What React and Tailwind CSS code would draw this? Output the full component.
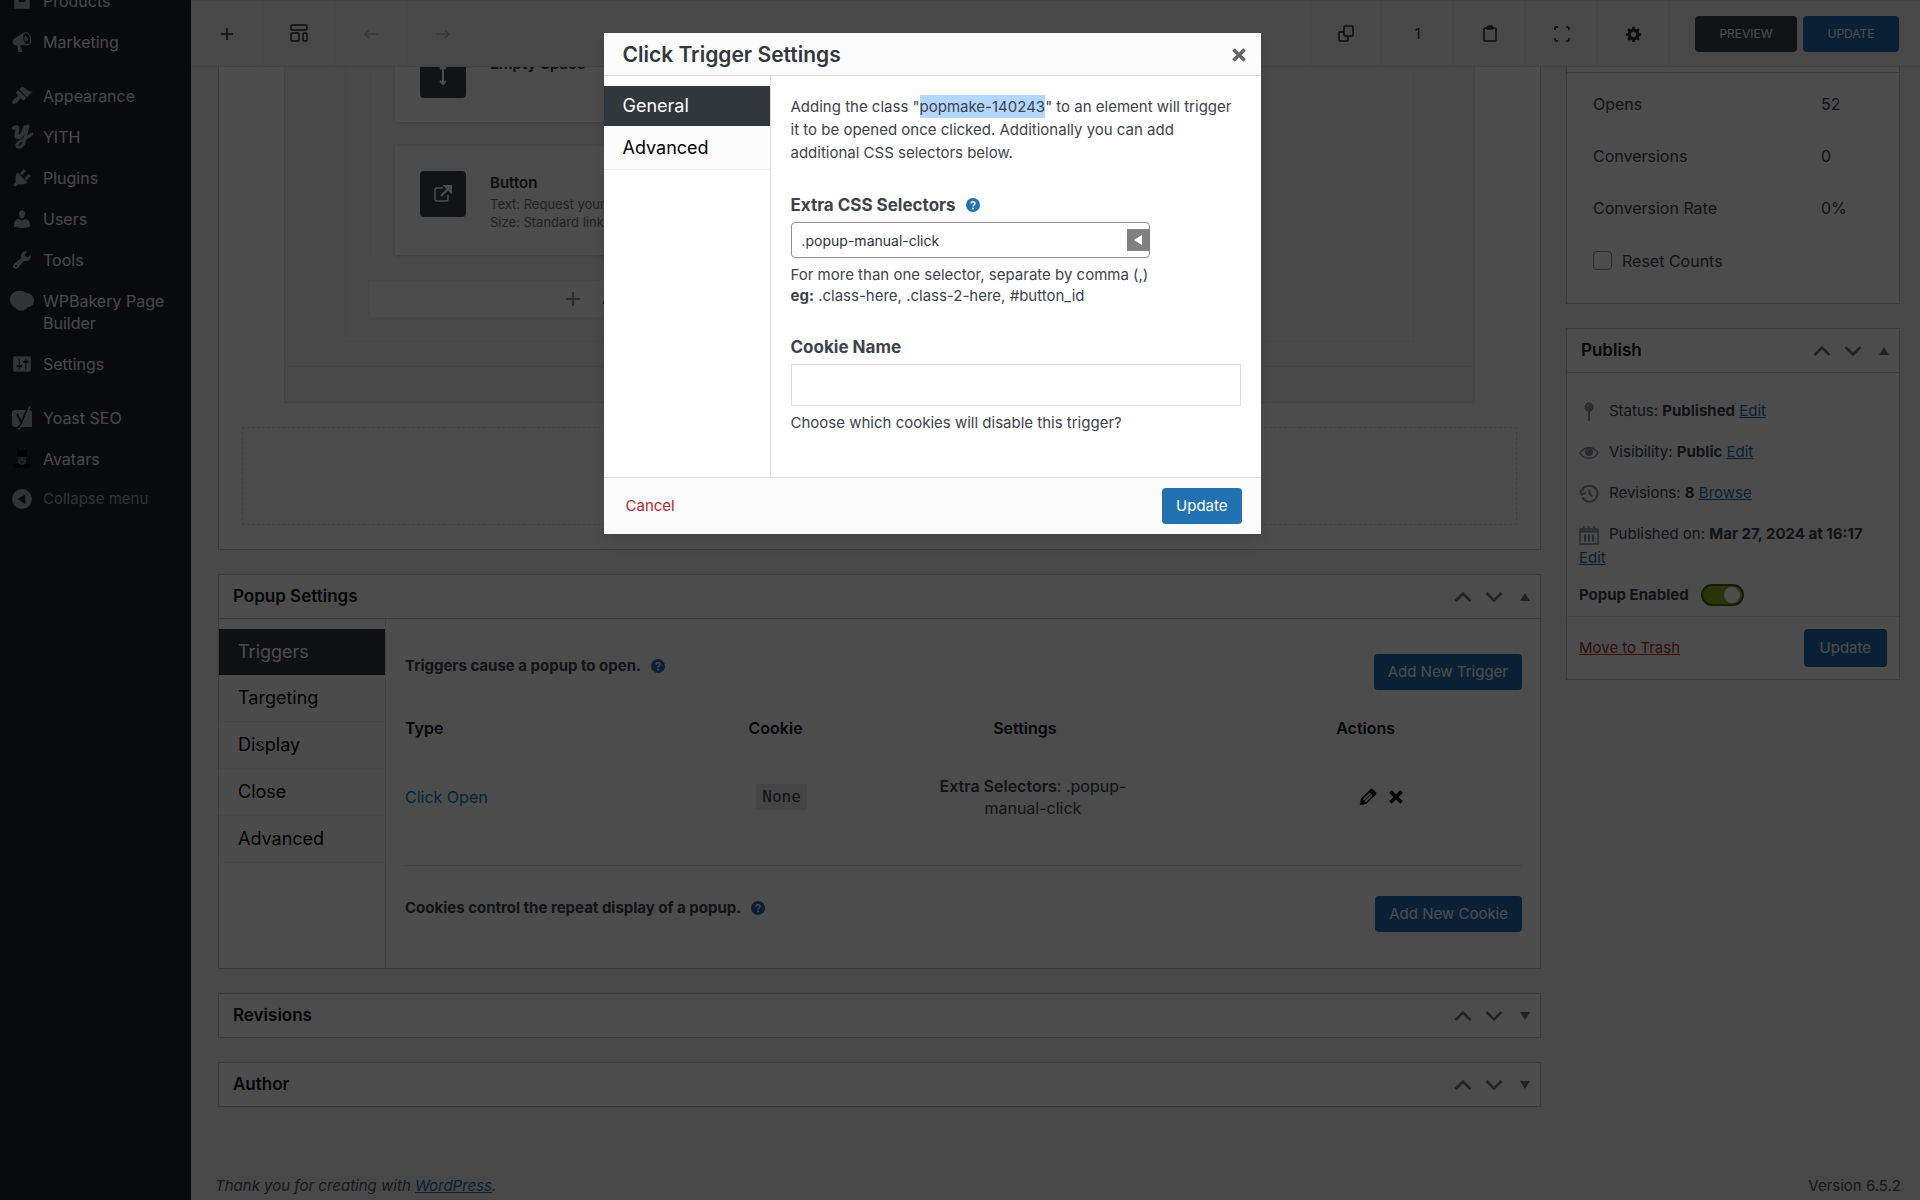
const DASHICONS = {
  products: 'M2 3h16v3H2zM3 7h14v10H3zM7 9v2h6V9z',
  marketing:
    'M18.15 5.94c.46 1.62.38 3.22-.02 4.48-.42 1.28-1.26 2.18-2.3 2.48-.16.06-.26.06-.4.06-.06.02-.12.02-.18.02-.06.02-.14.02-.22.02h-6.8l2.22 5.5c.02.14-.06.26-.14.34-.08.1-.24.16-.34.16H6.95c-.1 0-.26-.06-.34-.16-.08-.08-.16-.2-.14-.34l-1-5.5H4.25l-.02-.02c-.5.06-1.08-.18-1.54-.62s-.88-1.08-1.06-1.88c-.24-.8-.2-1.56-.02-2.2.18-.62.58-1.08 1.06-1.3l.02-.02 9-5.4c.1-.06.18-.1.24-.16.06-.04.14-.08.24-.12.16-.08.28-.12.5-.18 1.04-.3 2.24.1 3.22.98s1.84 2.24 2.26 3.86zm-2.58 5.98h-.02c.4-.1.74-.34 1.04-.7.58-.7.86-1.76.86-3.04 0-.64-.1-1.3-.28-1.98-.34-1.36-1.02-2.5-1.78-3.24s-1.68-1.1-2.46-.88c-.82.22-1.4.96-1.7 2-.32 1.04-.28 2.36.06 3.72.38 1.36 1 2.5 1.8 3.24.78.74 1.62 1.1 2.48.88zm-2.54-7.08c.22-.04.42-.02.62.04.38.16.76.48 1.02 1s.42 1.2.42 1.78c0 .3-.04.56-.12.8-.18.48-.44.84-.86.94-.34.1-.8-.06-1.14-.4s-.64-.86-.78-1.5c-.18-.62-.12-1.24.02-1.72s.48-.84.82-.94z',
  appearance:
    'M14.48 11.06L7.41 3.99l1.5-1.5c.5-.56 2.3-.47 3.51.32 1.21.8 1.43 1.28 2.91 2.1 1.18.64 2.45 1.26 4.45.85zm-.71.71L6.7 4.7 4.93 6.47c-.39.39-.39 1.02 0 1.41l1.06 1.06c.39.39.39 1.03 0 1.42-.6.6-1.43 1.11-2.21 1.69-.35.26-.7.53-1.01.84C1.43 14.23.4 16.08 1.4 17.07c.99 1 2.84-.03 4.18-1.36.31-.31.58-.66.85-1.02.57-.78 1.08-1.61 1.69-2.21.39-.39 1.02-.39 1.41 0l1.06 1.06c.39.39 1.02.39 1.41 0z',
  plugins:
    'M13.11 4.36L9.87 7.6 8 5.73l3.24-3.24c.35-.34 1.05-.2 1.56.32.52.51.66 1.21.31 1.55zm-8 1.77l.91-1.12 9.01 9.01-1.19.84c-.71.71-2.63 1.16-3.82 1.16H6.14L4.9 17.26c-.59.59-1.54.59-2.12 0-.59-.58-.59-1.53 0-2.12l1.24-1.24v-3.88c0-1.13.4-3.19 1.09-3.89zm7.26 3.97l3.24-3.24c.34-.35 1.04-.21 1.55.31.52.51.66 1.21.31 1.55l-3.24 3.25z',
  users:
    'M10 9.25c-2.27 0-2.73-3.44-2.73-3.44C7 4.02 7.82 2 9.97 2c2.16 0 2.98 2.02 2.71 3.81 0 0-.41 3.44-2.68 3.44zm0 2.57L12.72 10c2.39 0 4.52 2.33 4.52 4.53v2.49s-3.65 1.13-7.24 1.13c-3.65 0-7.24-1.13-7.24-1.13v-2.49c0-2.25 1.94-4.48 4.47-4.48z',
  tools:
    'M16.68 9.77c-1.34 1.34-3.3 1.67-4.95.99l-5.41 6.52c-.99.99-2.59.99-3.58 0s-.99-2.59 0-3.57l6.52-5.42c-.68-1.65-.35-3.61.99-4.95 1.28-1.28 3.12-1.62 4.72-1.06l-2.89 2.89 2.82 2.82 2.86-2.87c.53 1.58.18 3.39-1.08 4.65zM3.81 16.21c.4.39 1.04.39 1.43 0 .4-.4.4-1.04 0-1.43-.39-.4-1.03-.4-1.43 0-.39.39-.39 1.03 0 1.43z',
  bakery: 'M8 1.5c2 0 3.6.5 4.8 1.7C16.5 3.2 20 5.5 20 9.5c0 4-3 5.5-5.2 5.5C13.5 17.5 11 18 9 18c-2.2 0-3.6-1-4.4-2.2C1.5 14.5 0 12 0 8.8 0 4.5 3.5 1.5 8 1.5z',
  settings:
    'M18 16V4c0-.55-.45-1-1-1H3c-.55 0-1 .45-1 1v12c0 .55.45 1 1 1h14c.55 0 1-.45 1-1zM8 11h1c.55 0 1 .45 1 1s-.45 1-1 1H8v1.5c0 .28-.22.5-.5.5s-.5-.22-.5-.5V13H6c-.55 0-1-.45-1-1s.45-1 1-1h1V5.5c0-.28.22-.5.5-.5s.5.22.5.5V11zm5-2h-1c-.55 0-1-.45-1-1s.45-1 1-1h1V5.5c0-.28.22-.5.5-.5s.5.22.5.5V7h1c.55 0 1 .45 1 1s-.45 1-1 1h-1v5.5c0 .28-.22.5-.5.5s-.5-.22-.5-.5V9z',
  collapse: 'M10 1a9 9 0 1 1 0 18 9 9 0 0 1 0-18zM13 5.5L6 10l7 4.5z',
  gear:
    'M18 12h-2.18c-.17.7-.44 1.35-.81 1.93l1.54 1.54-2.1 2.1-1.54-1.54c-.58.36-1.23.63-1.91.79V19H8v-2.18c-.68-.16-1.33-.43-1.91-.79l-1.54 1.54-2.12-2.12 1.54-1.54c-.36-.58-.63-1.23-.79-1.91H1V9.03h2.17c.16-.7.44-1.35.8-1.94L2.43 5.55l2.1-2.1 1.54 1.54c.58-.37 1.24-.64 1.93-.81V2h3v2.18c.68.16 1.33.43 1.91.79l1.54-1.54 2.12 2.12-1.54 1.54c.36.59.64 1.24.8 1.94H18V12zm-8.5 1.5c1.66 0 3-1.34 3-3s-1.34-3-3-3-3 1.34-3 3 1.34 3 3 3z',
  edit:
    'M13.89 3.39l2.71 2.72c.46.46.42 1.24.03 1.64l-8.01 8.02-5.56 1.16 1.16-5.58s7.6-7.63 7.99-8.03c.39-.39 1.22-.39 1.68.07zm-2.73 2.79l-5.59 5.61 1.11 1.11 5.54-5.65zm-2.97 8.23l5.58-5.6-1.07-1.08-5.59 5.6z',
  close:
    'M12.12 10l3.53 3.53-2.12 2.12L10 12.12l-3.54 3.54-2.12-2.12L7.88 10 4.34 6.46l2.12-2.12L10 7.88l3.54-3.53 2.12 2.12z',
};

function Dashicon({ name, size = 22, className = '' }) {
  return (
    <svg width={size} height={size} viewBox="0 0 20 20" fill="currentColor" fillRule="evenodd" className={className} aria-hidden="true">
      <path d={DASHICONS[name]} />
    </svg>
  );
}

function YithIcon() {
  return (
    <svg width="22" height="26" viewBox="0 0 22 26" fill="none" stroke="currentColor" strokeLinecap="round" aria-hidden="true">
      <path d="M3 4c4-2 4 0 3 4s-1 6 2 5 5-5 6-10" strokeWidth="4" />
      <path d="M17 2l-3 13c-1 6-4 9-7 8s0-5 4-7 7-3 10-6" strokeWidth="3" />
    </svg>
  );
}

function YoastIcon() {
  return (
    <svg width="22" height="24" viewBox="0 0 22 24" aria-hidden="true">
      <path d="M4 4h14a3 3 0 0 1 3 3v13a1 1 0 0 1-1 1H4a3 3 0 0 1-3-3V7a3 3 0 0 1 3-3z" fill="currentColor" />
      <path d="M6 8l4 8M17 1l-6.500 16c-1 3-2 4-4 4.500" fill="none" stroke="#1d2327" strokeWidth="2" />
      <path d="M19 0l-7.500 18c-1 3-2 4.500-4.500 5" fill="none" stroke="currentColor" strokeWidth="1.500" />
    </svg>
  );
}

function AvatarIcon() {
  return (
    <svg width="22" height="22" viewBox="0 0 22 22" aria-hidden="true">
      <path d="M6 2h10v6H6zM1 16h20l-3 4H4z" fill="#000" />
      <path d="M7 9h8v4c0 3-2 4-4 4s-4-1-4-4z" fill="#777" />
      <path d="M7 11h3M12 11h3M9 14h4" stroke="#1d2327" strokeWidth="1" />
    </svg>
  );
}

const MENU = [
  [
    { label: 'Products', icon: <Dashicon name="products" /> },
    { label: 'Marketing', icon: <Dashicon name="marketing" /> },
  ],
  [
    { label: 'Appearance', icon: <Dashicon name="appearance" /> },
    { label: 'YITH', icon: <YithIcon /> },
    { label: 'Plugins', icon: <Dashicon name="plugins" /> },
    { label: 'Users', icon: <Dashicon name="users" /> },
    { label: 'Tools', icon: <Dashicon name="tools" /> },
    { label: 'WPBakery Page Builder', icon: <Dashicon name="bakery" size={24} /> },
    { label: 'Settings', icon: <Dashicon name="settings" /> },
  ],
  [
    { label: 'Yoast SEO', icon: <YoastIcon /> },
    { label: 'Avatars', icon: <AvatarIcon /> },
  ],
];

function Sidebar() {
  return (
    <nav className="w-[191px] shrink-0 bg-[#1d2327] text-base leading-[22px] text-[#f0f0f1] overflow-hidden">
      <div className="-mt-[19px]">
        {MENU.map((group, i) => (
          <ul key={i} className="mb-[13px]">
            {group.map(item => (
              <li key={item.label}>
                <a href="#" className="flex items-start pt-[9px] pb-[10px] pr-4">
                  <span className="w-[43px] h-[22px] shrink-0 flex items-center justify-center text-[#a7aaad]">{item.icon}</span>
                  {item.label}
                </a>
              </li>
            ))}
          </ul>
        ))}
        <button type="button" className="-mt-[13px] flex items-center py-2 text-[15px] text-[#a7aaad]">
          <span className="w-[43px] flex justify-center">
            <Dashicon name="collapse" />
          </span>
          Collapse menu
        </button>
      </div>
    </nav>
  );
}

function ToolIcon({ children, muted }) {
  return (
    <svg
      width="20"
      height="20"
      viewBox="0 0 20 20"
      fill="none"
      stroke="currentColor"
      strokeWidth="1.5"
      className={muted ? 'text-[#bbb]' : 'text-[#2b2b2b]'}
      aria-hidden="true"
    >
      {children}
    </svg>
  );
}

function ToolButton({ label, side = 'border-r', children }) {
  return (
    <button type="button" aria-label={label} className={`w-[72px] h-full flex items-center justify-center border-[#e3e3e4] ${side}`}>
      {children}
    </button>
  );
}

function Toolbar() {
  return (
    <header className="relative z-10 h-[67px] flex items-stretch bg-[#f0f0f1] border-y border-[#dcdcde]">
      <ToolButton label="Add element">
        <ToolIcon><path d="M10 4v12M4 10h12" /></ToolIcon>
      </ToolButton>
      <ToolButton label="Templates">
        <ToolIcon>
          <rect x="2" y="1" width="16" height="5" rx="1.500" />
          <rect x="2" y="9" width="8" height="8" rx="1" />
          <rect x="14" y="9" width="4" height="8" rx="1" />
        </ToolIcon>
      </ToolButton>
      <ToolButton label="Undo">
        <ToolIcon muted><path d="M17 10H4M8 6l-4 4 4 4" /></ToolIcon>
      </ToolButton>
      <ToolButton label="Redo" side="">
        <ToolIcon muted><path d="M3 10h13M12 6l4 4-4 4" /></ToolIcon>
      </ToolButton>
      <div className="ml-auto flex">
        <ToolButton label="Copy" side="border-x">
          <ToolIcon>
            <rect x="8" y="2" width="9" height="10" rx="1" />
            <path d="M8 8H4a1 1 0 0 0-1 1v7a1 1 0 0 0 1 1h7a1 1 0 0 0 1-1v-4" />
          </ToolIcon>
        </ToolButton>
        <ToolButton label="Copied elements">
          <span className="text-sm text-[#2b2b2b]">1</span>
        </ToolButton>
        <ToolButton label="Paste">
          <ToolIcon>
            <rect x="4" y="4" width="12" height="13" rx="1" />
            <path d="M7.500 3.500c0-2 5-2 5 0V5h-5z" />
          </ToolIcon>
        </ToolButton>
        <ToolButton label="Full screen">
          <ToolIcon>
            <path d="M6 3H4a1 1 0 0 0-1 1v2M14 3h2a1 1 0 0 1 1 1v2M6 17H4a1 1 0 0 1-1-1v-2M14 17h2a1 1 0 0 0 1-1v-2" />
          </ToolIcon>
        </ToolButton>
        <ToolButton label="Page settings">
          <Dashicon name="gear" size={18} className="text-[#2b2b2b]" />
        </ToolButton>
        <div className="flex items-center gap-[6px] pl-[25px] pr-[21px] text-[12px]">
          <button type="button" className="w-[102px] h-9 rounded-sm bg-[#3d4148] text-white uppercase">Preview</button>
          <button type="button" className="w-24 h-9 rounded-sm bg-[#2271b1] text-white uppercase">Update</button>
        </div>
      </div>
    </header>
  );
}

function Chevron({ up }) {
  return (
    <svg width="18" height="12" viewBox="0 0 18 12" fill="none" stroke="currentColor" strokeWidth="2.500" aria-hidden="true">
      <path d={up ? 'M1.500 10L9 2.500l7.500 7.500' : 'M1.500 2L9 9.500 16.500 2'} />
    </svg>
  );
}

function Postbox({ title, open = true, children }) {
  return (
    <section className="bg-white border border-[#c3c4c7]">
      <div className={`flex items-center pl-[14px] ${open ? 'h-[44px] border-b border-[#c3c4c7]' : 'h-[43px]'}`}>
        <h2 className="flex-1 text-[17px] font-semibold text-[#101418]">{title}</h2>
        <div className="flex text-[#70747a]">
          <button type="button" aria-label={`Move ${title} up`} className="w-[31px] h-8 flex items-center justify-center">
            <Chevron up />
          </button>
          <button type="button" aria-label={`Move ${title} down`} className="w-[31px] h-8 flex items-center justify-center">
            <Chevron />
          </button>
          <button type="button" aria-label={`Toggle ${title}`} className="w-[31px] h-8 flex items-center justify-center">
            <svg width="10" height="8" viewBox="0 0 10 8" fill="currentColor" aria-hidden="true">
              <path d={open ? 'M5 0l5 8H0z' : 'M0 0h10L5 8z'} />
            </svg>
          </button>
        </div>
      </div>
      {children}
    </section>
  );
}

function ElementCard({ icon, title, children }) {
  return (
    <div className="flex bg-white px-[25px] pt-[25px] pb-6 shadow-sm">
      <span className="size-[46px] shrink-0 mr-6 rounded-sm bg-[#3d4148] text-white flex items-center justify-center">
        <svg width="22" height="22" viewBox="0 0 22 22" fill="none" stroke="currentColor" strokeWidth="2" aria-hidden="true">
          {icon}
        </svg>
      </span>
      <div className="text-[13px] leading-[18px] text-[#777]">
        <h3 className="mb-[3px] pt-[2px] text-[15px] leading-[19px] font-semibold text-[#333]">{title}</h3>
        {children}
      </div>
    </div>
  );
}

function Builder() {
  return (
    <section className="bg-white border border-[#c3c4c7] px-[23px] pb-6">
      <div className="mx-[42px] bg-[#f0f0f1] border border-[#e0e0e0]">
        <div className="px-[60px] pb-6 border-b border-[#e2e2e2]">
          <div className="border border-[#e6e6e6] px-6 pb-6">
            <div className="w-1/2">
              <div className="border-x border-[#e6e6e6] px-6">
                <ElementCard title="Empty Space" icon={<path d="M11 2v18M8 5l3-3 3 3M8 17l3 3 3-3" />} />
                <div className="h-6" />
                <ElementCard
                  title="Button"
                  icon={
                    <>
                      <path d="M11 5H5a2 2 0 0 0-2 2v9a2 2 0 0 0 2 2h9a2 2 0 0 0 2-2v-4" strokeWidth="1.500" />
                      <path d="M9 13l9-9M13 3h6v6z" />
                    </>
                  }
                >
                  <p>Text: Request your</p>
                  <p>Size: Standard link</p>
                </ElementCard>
              </div>
              <button type="button" className="mt-[26px] w-full h-9 bg-white flex items-center justify-center gap-5 text-sm text-[#777]">
                <svg width="18" height="18" viewBox="0 0 18 18" stroke="currentColor" strokeWidth="1.500" aria-hidden="true">
                  <path d="M9 2v14M2 9h14" />
                </svg>
                Add element
              </button>
            </div>
          </div>
        </div>
        <div className="h-[35px]" />
      </div>
      <div className="mt-6 h-[98px] border border-dashed border-[#ddd]" />
    </section>
  );
}

function Help() {
  return (
    <svg width="14" height="14" viewBox="0 0 14 14" className="shrink-0" aria-hidden="true">
      <circle cx="7" cy="7" r="7" fill="#2271b1" />
      <path d="M5 5.500c0-2.500 4-2.500 4 0 0 1.500-2 1.500-2 3" fill="none" stroke="#fff" strokeWidth="1.500" />
      <circle cx="7" cy="10.500" r="1" fill="#fff" />
    </svg>
  );
}

function PrimaryButton({ children, size = 'h-9 px-[14px]' }) {
  return (
    <button type="button" className={`rounded-sm bg-[#2271b1] text-[15px] text-white ${size}`}>
      {children}
    </button>
  );
}

const TABS = ['Triggers', 'Targeting', 'Display', 'Close', 'Advanced'];

function PopupSettings() {
  return (
    <Postbox title="Popup Settings">
      <div className="flex">
        <ul className="w-[167px] shrink-0 border-r border-[#ddd] pt-[10px]">
          {TABS.map((tab, i) => (
            <li key={tab} className={i === 0 ? 'bg-[#32373c] text-white' : 'bg-[#fcfcfc] text-black border-b border-[#eee]'}>
              <button type="button" className="w-full h-[46px] pl-[19px] text-left text-lg">{tab}</button>
            </li>
          ))}
        </ul>
        <div className="flex-1 pl-[19px] pr-[18px] pt-[35px] pb-9">
          <div className="flex items-start justify-between">
            <p className="flex items-center gap-[10px] leading-6 text-[15px] font-bold text-[#3c434a]">
              Triggers cause a popup to open. <Help />
            </p>
            <PrimaryButton>Add New Trigger</PrimaryButton>
          </div>
          <table className="w-full table-fixed mt-[23px] text-base leading-[22px] text-[#3c434a]">
            <thead className="text-[#101418]">
              <tr>
                <th className="w-[27%] py-1 text-left font-semibold">Type</th>
                <th className="w-[12%] py-1 pl-1 font-semibold">Cookie</th>
                <th className="w-[33%] py-1 font-semibold">Settings</th>
                <th className="w-[28%] py-1 font-semibold">Actions</th>
              </tr>
            </thead>
            <tbody>
              <tr className="text-center">
                <td className="py-[43px] text-left">
                  <a href="#" className="text-[#0085ba]">Click Open</a>
                </td>
                <td className="pl-4">
                  <code className="inline-block px-[6px] py-[2px] bg-[#e8e8e9] font-['DejaVu_Sans_Mono',monospace] text-base leading-[22px]">None</code>
                </td>
                <td className="pl-20 pr-16">
                  <strong className="font-semibold">Extra Selectors</strong>: .popup-manual-click
                </td>
                <td className="pl-8">
                  <div className="flex items-center justify-center gap-1 text-black">
                    <button type="button" aria-label="Edit trigger"><Dashicon name="edit" size={24} /></button>
                    <button type="button" aria-label="Delete trigger"><Dashicon name="close" size={24} /></button>
                  </div>
                </td>
              </tr>
            </tbody>
          </table>
          <hr className="mt-[14px] mb-[30px] border-[#ddd]" />
          <div className="flex items-start justify-between">
            <p className="flex items-center gap-[10px] leading-6 text-[15px] font-bold text-[#3c434a]">
              Cookies control the repeat display of a popup. <Help />
            </p>
            <PrimaryButton>Add New Cookie</PrimaryButton>
          </div>
        </div>
      </div>
    </Postbox>
  );
}

const STATS = [
  ['Opens', '52'],
  ['Conversions', '0'],
  ['Conversion Rate', '0%'],
];

function Analytics() {
  return (
    <Postbox title="Analytics">
      <div className="px-[26px] pt-[5px] pb-4 text-base text-[#3c434a]">
        <table className="w-full">
          <tbody>
            {STATS.map(([name, value]) => (
              <tr key={name} className="h-[52px]">
                <td>{name}</td>
                <td className="w-[52px]">{value}</td>
              </tr>
            ))}
          </tbody>
        </table>
        <label className="flex items-center gap-[10px] h-[53px]">
          <input type="checkbox" className="appearance-none size-[19px] rounded border border-[#8c8f94] bg-white" />
          Reset Counts
        </label>
      </div>
    </Postbox>
  );
}

const STATUS_ROWS = [
  {
    label: 'Status:',
    value: 'Published',
    action: 'Edit',
    icon: (
      <>
        <circle cx="10" cy="5" r="4.500" fill="currentColor" stroke="none" />
        <path d="M10 8v11" />
        <path d="M8 4.500c0-1 1-2 2-2" stroke="#fff" strokeWidth="1" />
      </>
    ),
  },
  {
    label: 'Visibility:',
    value: 'Public',
    action: 'Edit',
    icon: (
      <>
        <path d="M1 10c4-7 14-7 18 0-4 7-14 7-18 0z" strokeWidth="1.500" />
        <circle cx="10" cy="9" r="4" fill="currentColor" stroke="none" />
        <path d="M8 8.500c0-1 1-2 2-2" stroke="#fff" strokeWidth="1" />
      </>
    ),
  },
  {
    label: 'Revisions:',
    value: '8',
    action: 'Browse',
    icon: <path d="M3.500 13.500A8 8 0 1 0 3 7M1 6l1.500 4.500L7 9M10.500 5.500V10l3 2.500" strokeWidth="2" />,
  },
  {
    label: 'Published on:',
    value: 'Mar 27, 2024 at 16:17',
    action: 'Edit',
    icon: (
      <>
        <path d="M1 4h18v15H1zM5 1v4M10 1v4M15 1v4" strokeWidth="1.500" />
        <path d="M1 6.500h18M6 9.500v7M10 9.500v7M14 9.500v7" strokeWidth="2" />
      </>
    ),
  },
];

function Publish() {
  return (
    <Postbox title="Publish">
      <div className="px-3 pt-[18px] pb-[9px] text-[15px] leading-6 text-[#3c434a]">
        {STATUS_ROWS.map(row => (
          <p key={row.label} className="pt-2 pb-[9px]">
            <svg
              width="20"
              height="20"
              viewBox="0 0 20 20"
              fill="none"
              stroke="currentColor"
              strokeWidth="2"
              className="inline-block mr-[10px] text-[#8c8f94]"
              aria-hidden="true"
            >
              {row.icon}
            </svg>
            {row.label} <strong className="font-bold">{row.value}</strong>{' '}
            <a href="#" className="text-[#2271b1] underline">{row.action}</a>
          </p>
        ))}
        <label className="flex items-center gap-3 mt-1 font-bold">
          Popup Enabled
          <span className="relative flex">
            <input
              type="checkbox"
              role="switch"
              defaultChecked
              className="appearance-none w-[43px] h-[22px] rounded-full border-2 border-[#4a5a10] bg-[#8fae1b]"
            />
            <span className="absolute right-1 top-[3px] size-4 rounded-full bg-white pointer-events-none" />
          </span>
        </label>
      </div>
      <div className="flex items-center justify-between border-t border-[#dcdcde] p-3 text-[15px]">
        <a href="#" className="text-[#b32d2e] underline">Move to Trash</a>
        <PrimaryButton size="h-[38px] px-4">Update</PrimaryButton>
      </div>
    </Postbox>
  );
}

function TriggerModal() {
  return (
    <div
      role="dialog"
      aria-modal="true"
      aria-labelledby="modal-title"
      className="w-[657px] mt-[33px] bg-white shadow-lg text-[#3c434a]"
    >
      <div className="h-[43px] flex items-center justify-between pl-[19px] pr-[10px] pt-[2px] bg-[#fcfcfc] border-b border-[#ddd]">
        <h1 id="modal-title" className="text-[21px] font-semibold text-[#32373c]">Click Trigger Settings</h1>
        <button type="button" aria-label="Close" className="text-[#666]">
          <Dashicon name="close" size={24} />
        </button>
      </div>
      <div className="flex">
        <ul className="w-[167px] shrink-0 border-r border-[#ddd] pt-[10px] text-lg">
          <li className="bg-[#32373c] text-white">
            <button type="button" className="w-full h-10 pl-[19px] text-left">General</button>
          </li>
          <li className="bg-[#fcfcfc] text-black border-b border-[#eee]">
            <button type="button" className="w-full h-[43px] pl-[19px] text-left">Advanced</button>
          </li>
        </ul>
        <div className="flex-1 px-5 pt-[19px] pb-[44px] text-[15px]">
          <p className="leading-[23px]">
            Adding the class "<mark className="bg-[#b3d7ff] py-[2px] text-inherit">popmake-140243</mark>" to an element will trigger it to be opened once
            clicked. Additionally you can add additional CSS selectors below.
          </p>
          <label htmlFor="selectors" className="mt-[29px] flex items-center gap-[10px] text-[17px] leading-6 font-bold">
            Extra CSS Selectors <Help />
          </label>
          <div className="relative w-[359px] mt-[5px]">
            <input
              id="selectors"
              type="text"
              defaultValue=".popup-manual-click"
              className="block w-full h-9 px-[10px] border border-[#8c8f94] rounded text-sm text-[#2c3338]"
            />
            <button type="button" aria-label="Pick selector" className="absolute right-0 top-[7px] w-[23px] h-[22px] bg-[#808080] flex items-center justify-center">
              <svg width="8" height="10" viewBox="0 0 8 10" fill="#fff" aria-hidden="true"><path d="M8 0v10L0 5z" /></svg>
            </button>
          </div>
          <p className="mt-[6px] leading-[21px]">
            For more than one selector, separate by comma (,)
            <br />
            <strong className="font-bold">eg:</strong> .class-here, .class-2-here, #button_id
          </p>
          <label htmlFor="cookie" className="mt-[29px] block text-[17px] leading-6 font-bold">Cookie Name</label>
          <input id="cookie" type="text" className="block w-full h-[42px] mt-[5px] px-2 border border-[#ddd]" />
          <p className="mt-[6px] leading-[21px]">Choose which cookies will disable this trigger?</p>
        </div>
      </div>
      <div className="flex items-center justify-between h-[57px] pl-[22px] pr-[19px] bg-[#fcfcfc] border-t border-[#ddd] text-[15px]">
        <button type="button" className="text-[#b32d2e]">Cancel</button>
        <PrimaryButton>Update</PrimaryButton>
      </div>
    </div>
  );
}

export default function App() {
  return (
    <div className="relative min-h-screen flex bg-[#f0f0f1] font-['Inter',sans-serif] overflow-hidden">
      <Sidebar />
      <div className="flex-1 flex flex-col">
        <Toolbar />
        <main className="flex-1 flex items-start gap-[25px] -mt-[43px] pl-[27px] pr-5">
          <div className="flex-1 flex flex-col gap-6">
            <Builder />
            <PopupSettings />
            <Postbox title="Revisions" open={false} />
            <Postbox title="Author" open={false} />
          </div>
          <div className="w-[334px] flex flex-col gap-6 pt-1">
            <Analytics />
            <Publish />
          </div>
        </main>
        <footer className="flex justify-between pl-6 pr-[19px] pb-[3px] text-[15px] text-[#50575e]">
          <p className="italic">
            Thank you for creating with <a href="#" className="text-[#2271b1] underline">WordPress</a>.
          </p>
          <p>Version 6.5.2</p>
        </footer>
      </div>
      {/* Modal backdrop */}
      <div className="absolute inset-0 z-20 flex items-start justify-center bg-black/70 pr-[56px]">
        <TriggerModal />
      </div>
    </div>
  );
}
